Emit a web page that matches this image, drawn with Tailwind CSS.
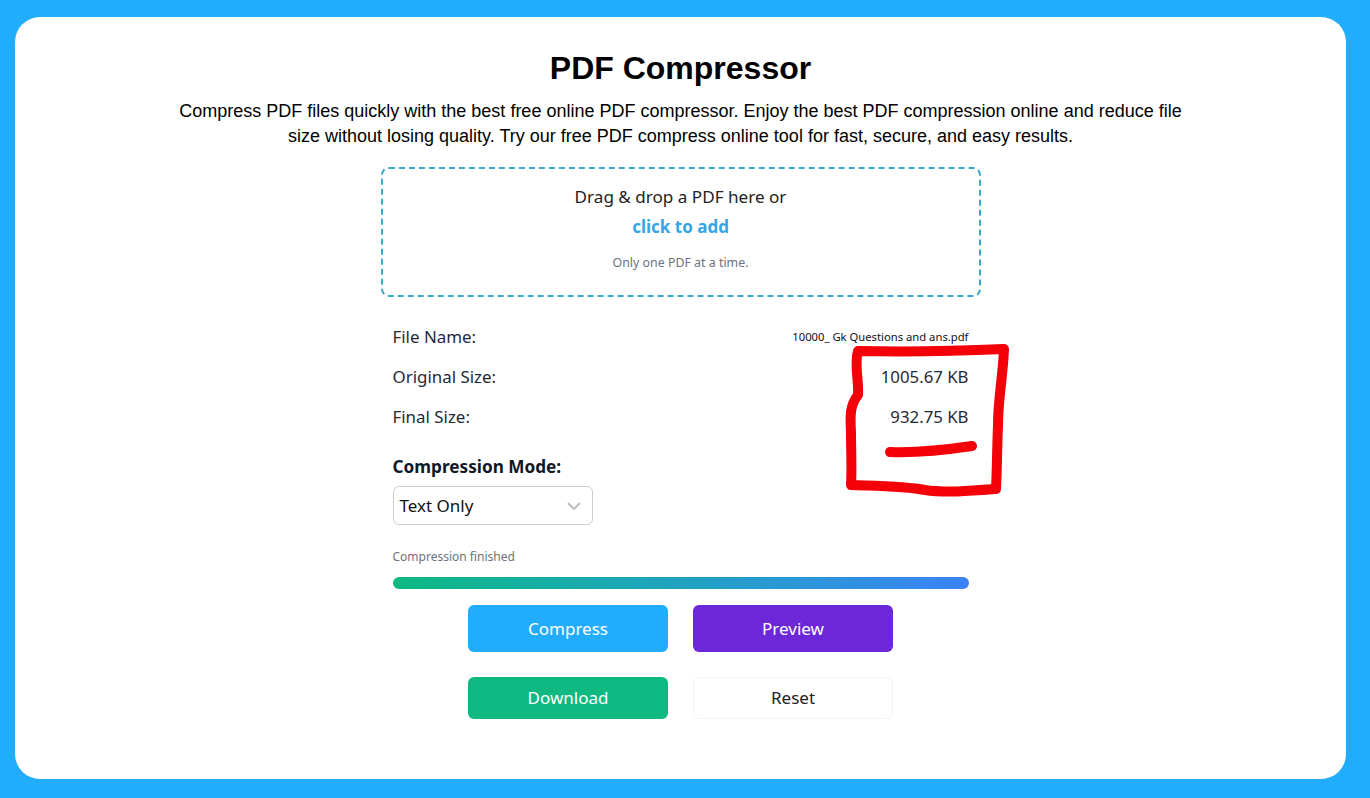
<!DOCTYPE html>
<html lang="en">
<head>
  <meta charset="UTF-8">
  <meta name="viewport" content="width=device-width, initial-scale=1.0">
  <title>PDF Compressor</title>
  <script src="https://cdn.jsdelivr.net/npm/@tailwindcss/browser@4"></script>
</head>
<body class="bg-[#22adfc] h-[798px] overflow-hidden pt-[17px] pl-[15px] pr-[24px] font-['Noto_Sans',sans-serif] text-[#1f2937]">
  <div class="relative bg-white rounded-[25px] h-[762px] w-[1331px] flex flex-col items-center">
    <h1 class="mt-[29px] font-['Liberation_Sans',sans-serif] font-bold text-[32px] leading-[44px] text-black">PDF Compressor</h1>
    <p class="mt-[9px] w-[1010px] text-center font-['Liberation_Sans',sans-serif] text-[18px] leading-[25px] text-black">Compress PDF files quickly with the best free online PDF compressor. Enjoy the best PDF compression online and reduce file size without losing quality. Try our free PDF compress online tool for fast, secure, and easy results.</p>

    <div class="mt-[18px] w-[600px] h-[130px] border-2 border-dashed border-[#3aa9c9] rounded-[8px] flex flex-col items-center">
      <p class="mt-[14px] text-[17.1px] leading-[28px] text-[#222]">Drag &amp; drop a PDF here or</p>
      <p class="mt-[2px] text-[17px] leading-[28px] font-bold text-[#36a5e6]">click to add</p>
      <p class="mt-[12px] text-[12.4px] leading-[20px] text-[#6b7280]">Only one PDF at a time.</p>
    </div>

    <div class="mt-[20px] w-[576px] flex flex-col">
      <div class="flex justify-between items-center h-[40px]">
        <span class="text-[16.9px]">File Name:</span>
        <span class="text-[11.25px] text-[#111]">10000_ Gk Questions and ans.pdf</span>
      </div>
      <div class="flex justify-between items-center h-[40px]">
        <span class="text-[16.9px]">Original Size:</span>
        <span class="text-[16.8px]">1005.67 KB</span>
      </div>
      <div class="flex justify-between items-center h-[40px]">
        <span class="text-[16.9px]">Final Size:</span>
        <span class="text-[16.8px]">932.75 KB</span>
      </div>
      <label class="mt-[16px] text-[17.2px] leading-[28px] font-bold text-[#111827]">Compression Mode:</label>
      <div class="mt-[5px] w-[200px] h-[39px] border border-[#ccc] rounded-[6px] flex items-center justify-between pl-[6px] pr-[11px] text-[17px] text-[#111]">
        <span>Text Only</span>
        <svg class="w-[14px] h-[14px] text-[#bbb]" viewBox="0 0 14 14" fill="none" stroke="currentColor" stroke-width="1.8"><path d="M1 4l6 6 6-6"/></svg>
      </div>
      <p class="mt-[22px] text-[12px] leading-[20px] text-[#6b7280]">Compression finished</p>
      <div class="mt-[10px] h-[12px] rounded-full bg-gradient-to-r from-[#10b981] to-[#3b82f6]"></div>
    </div>

    <div class="mt-[16px] grid grid-cols-[200px_200px] gap-x-[25px] gap-y-[25px] text-[17px]">
      <button class="h-[47px] rounded-[6px] bg-[#22adfc] text-white">Compress</button>
      <button class="h-[47px] rounded-[6px] bg-[#6b27d8] text-white">Preview</button>
      <button class="h-[42px] rounded-[6px] bg-[#10b981] text-white">Download</button>
      <button class="h-[42px] rounded-[6px] bg-white border border-[#f3f3f3] text-[#222]">Reset</button>
    </div>

    <!-- red marker scribble drawn over the sizes -->
    <svg class="absolute left-[825px] top-[318px] w-[190px] h-[165px]" viewBox="840 335 190 165" fill="none" stroke="#f40009" stroke-linecap="round" stroke-linejoin="round">
      <path stroke-width="10" d="M858 351 C900 352 960 351 1004 349 C1003 375 998 400 998 425 C997 450 997 470 996 489 C970 491 945 493 925 490 C905 486 880 486 851 485 C852 470 851 450 851 432 C850 415 850 405 858 395 C859 380 854 365 858 351"/>
      <path stroke-width="10" d="M890 452 C915 453 945 450 972 446"/>
    </svg>
  </div>
</body>
</html>
